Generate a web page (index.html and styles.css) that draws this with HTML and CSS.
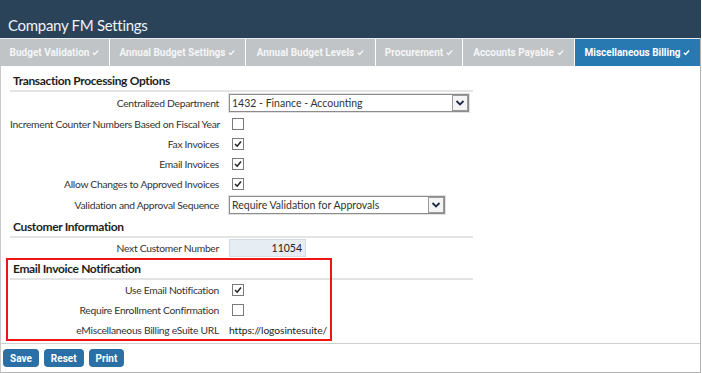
FILE: index.html
```html
<!DOCTYPE html>
<html lang="en">
<head>
    <meta charset="UTF-8">
    <meta name="viewport" content="width=device-width, initial-scale=1.0">
    <title>Company FM Settings</title>
    <link rel="stylesheet" href="styles.css">
</head>
<body>
    <div class="page">
        <!-- Title bar -->
        <div class="header">
            <h1>Company FM Settings</h1>
        </div>

        <!-- Tabs -->
        <div class="tabs">
            <div class="tab" style="width: 110px">Budget Validation <svg class="tick" viewBox="0 0 8 8"><path d="M1 4.2 L3 6.2 L7 1.8"/></svg></div>
            <div class="tab" style="width: 136px">Annual Budget Settings <svg class="tick" viewBox="0 0 8 8"><path d="M1 4.2 L3 6.2 L7 1.8"/></svg></div>
            <div class="tab" style="width: 130px">Annual Budget Levels <svg class="tick" viewBox="0 0 8 8"><path d="M1 4.2 L3 6.2 L7 1.8"/></svg></div>
            <div class="tab" style="width: 87px">Procurement <svg class="tick" viewBox="0 0 8 8"><path d="M1 4.2 L3 6.2 L7 1.8"/></svg></div>
            <div class="tab" style="width: 112px">Accounts Payable <svg class="tick" viewBox="0 0 8 8"><path d="M1 4.2 L3 6.2 L7 1.8"/></svg></div>
            <div class="tab active">Miscellaneous Billing <svg class="tick" viewBox="0 0 8 8"><path d="M1 4.2 L3 6.2 L7 1.8"/></svg></div>
        </div>

        <div class="content">
            <!-- Transaction Processing Options -->
            <div class="section">
                <h2 class="section-title first">Transaction Processing Options</h2>
                <div class="row tall">
                    <label class="field-label">Centralized Department</label>
                    <div class="select wide">
                        <span class="select-text">1432 - Finance - Accounting</span>
                        <span class="select-arrow"><svg viewBox="0 0 10 8"><path d="M1.5 2 L5 5.5 L8.5 2"/></svg></span>
                    </div>
                </div>
                <div class="row">
                    <label class="field-label">Increment Counter Numbers Based on Fiscal Year</label>
                    <span class="checkbox"></span>
                </div>
                <div class="row">
                    <label class="field-label">Fax Invoices</label>
                    <span class="checkbox"><svg viewBox="0 0 10 10"><path d="M2 5 L4.2 7.2 L8 2.6"/></svg></span>
                </div>
                <div class="row">
                    <label class="field-label">Email Invoices</label>
                    <span class="checkbox"><svg viewBox="0 0 10 10"><path d="M2 5 L4.2 7.2 L8 2.6"/></svg></span>
                </div>
                <div class="row">
                    <label class="field-label">Allow Changes to Approved Invoices</label>
                    <span class="checkbox"><svg viewBox="0 0 10 10"><path d="M2 5 L4.2 7.2 L8 2.6"/></svg></span>
                </div>
                <div class="row tall">
                    <label class="field-label">Validation and Approval Sequence</label>
                    <div class="select medium">
                        <span class="select-text">Require Validation for Approvals</span>
                        <span class="select-arrow"><svg viewBox="0 0 10 8"><path d="M1.5 2 L5 5.5 L8.5 2"/></svg></span>
                    </div>
                </div>
            </div>

            <!-- Customer Information -->
            <div class="section">
                <h2 class="section-title">Customer Information</h2>
                <div class="row">
                    <label class="field-label">Next Customer Number</label>
                    <div class="number-input">11054</div>
                </div>
            </div>

            <!-- Email Invoice Notification -->
            <div class="section">
                <h2 class="section-title">Email Invoice Notification</h2>
                <div class="row">
                    <label class="field-label">Use Email Notification</label>
                    <span class="checkbox"><svg viewBox="0 0 10 10"><path d="M2 5 L4.2 7.2 L8 2.6"/></svg></span>
                </div>
                <div class="row">
                    <label class="field-label">Require Enrollment Confirmation</label>
                    <span class="checkbox"></span>
                </div>
                <div class="row">
                    <label class="field-label">eMiscellaneous Billing eSuite URL</label>
                    <span class="field-value">https://logosintesuite/</span>
                </div>
            </div>

            <!-- highlight box drawn over the email section -->
            <div class="highlight"></div>
        </div>

        <div class="footer">
            <button class="btn">Save</button>
            <button class="btn">Reset</button>
            <button class="btn">Print</button>
        </div>
    </div>
</body>
</html>
```

FILE: styles.css
```css
body {
    margin: 0;
    font-family: Lato, Arial, sans-serif;
    background-color: #ffffff;
    color: #222;
}

.page {
    box-sizing: border-box;
    width: 701px;
    height: 373px;
    border-right: 1px solid #b4b4b4;
    border-bottom: 1px solid #b4b4b4;
    border-left: 1px solid #c8c8c8;
}

/* Title bar */
.header {
    background-color: #2b4358;
    height: 38px;
    display: flex;
    align-items: flex-end;
    margin: 0 -1px;
}

.header h1 {
    margin: 0 0 3px 8px;
    font-size: 15px;
    letter-spacing: -0.3px;
    font-weight: normal;
    color: #eef2f5;
    line-height: 20px;
}

/* Tabs */
.tabs {
    display: flex;
    border-top: 1px solid #e8ecef;
    height: 27px;
    margin-left: -1px;
}

.tab {
    box-sizing: border-box;
    background-color: #c0c4c6;
    color: #f5f6f7;
    font-family: Roboto, Arial, sans-serif;
    font-weight: bold;
    font-size: 10px;
    display: flex;
    align-items: center;
    justify-content: center;
    border-right: 1px solid #ffffff;
    white-space: nowrap;
}

.tab.active {
    background-color: #2878b2;
    color: #ffffff;
    flex: 1;
    border-right: none;
}

.tick {
    width: 7px;
    height: 7px;
    margin-left: 3px;
}

.tick path {
    fill: none;
    stroke: currentColor;
    stroke-width: 1.6;
}

/* Form content */
.content {
    position: relative;
    height: 277px;
    padding-left: 9px;
}

.section {
    width: 463px;
}

.section-title {
    margin: 0;
    font-size: 12px;
    letter-spacing: -0.35px;
    font-weight: bold;
    color: #1e1e1e;
    padding: 3px 0 1px 3px;
    line-height: 16px;
    border-bottom: 2px solid #e4e4e4;
}

.section-title.first {
    padding-top: 7px;
}

.row {
    display: flex;
    align-items: center;
    height: 20px;
}

.row.tall {
    height: 22px;
}

.field-label {
    width: 209px;
    text-align: right;
    font-size: 10.3px;
    letter-spacing: -0.28px;
    color: #333;
    margin-right: 10px;
    white-space: nowrap;
}

.field-value {
    font-size: 10.3px;
    letter-spacing: -0.1px;
    color: #222;
}

.checkbox {
    width: 10px;
    height: 10px;
    border: 1px solid #7a7a7a;
    margin-left: 3px;
    background-color: #fff;
    display: flex;
}

.checkbox svg {
    width: 10px;
    height: 10px;
}

.checkbox path {
    fill: none;
    stroke: #222;
    stroke-width: 1.5;
}

.select {
    height: 16px;
    border: 1px solid #8c8c8c;
    box-shadow: 0 0 0 1px #e2e2e2;
    display: flex;
    align-items: center;
    background-color: #fff;
}

.select.wide {
    width: 238px;
}

.select.medium {
    width: 214px;
}

.select-text {
    flex: 1;
    font-size: 10.5px;
    padding-left: 2px;
    color: #333;
}

.select-arrow {
    width: 14px;
    height: 14px;
    border: 1px solid #9a9a9a;
    background-color: #f4f4f4;
    display: flex;
    align-items: center;
    justify-content: center;
}

.select-arrow svg {
    width: 10px;
    height: 8px;
}

.select-arrow path {
    fill: none;
    stroke: #1c2a44;
    stroke-width: 1.8;
}

.number-input {
    width: 77px;
    height: 18px;
    box-sizing: border-box;
    background-color: #e6edf3;
    border: 1px solid #d4dbe2;
    font-size: 10.5px;
    color: #222;
    text-align: right;
    line-height: 16px;
    padding-right: 3px;
}

.highlight {
    position: absolute;
    left: 5px;
    top: 192px;
    width: 322px;
    height: 79px;
    border: 2px solid #f01414;
}

/* Footer buttons */
.footer {
    border-top: 1px solid #cfcfcf;
    height: 28px;
    display: flex;
    align-items: center;
    gap: 5px;
    padding-left: 2px;
}

.btn {
    background-color: #2a6fa6;
    color: #fff;
    border: none;
    border-radius: 4px;
    font-family: Roboto, Arial, sans-serif;
    font-weight: bold;
    font-size: 10px;
    height: 18px;
    padding: 0 7px;
}
```
